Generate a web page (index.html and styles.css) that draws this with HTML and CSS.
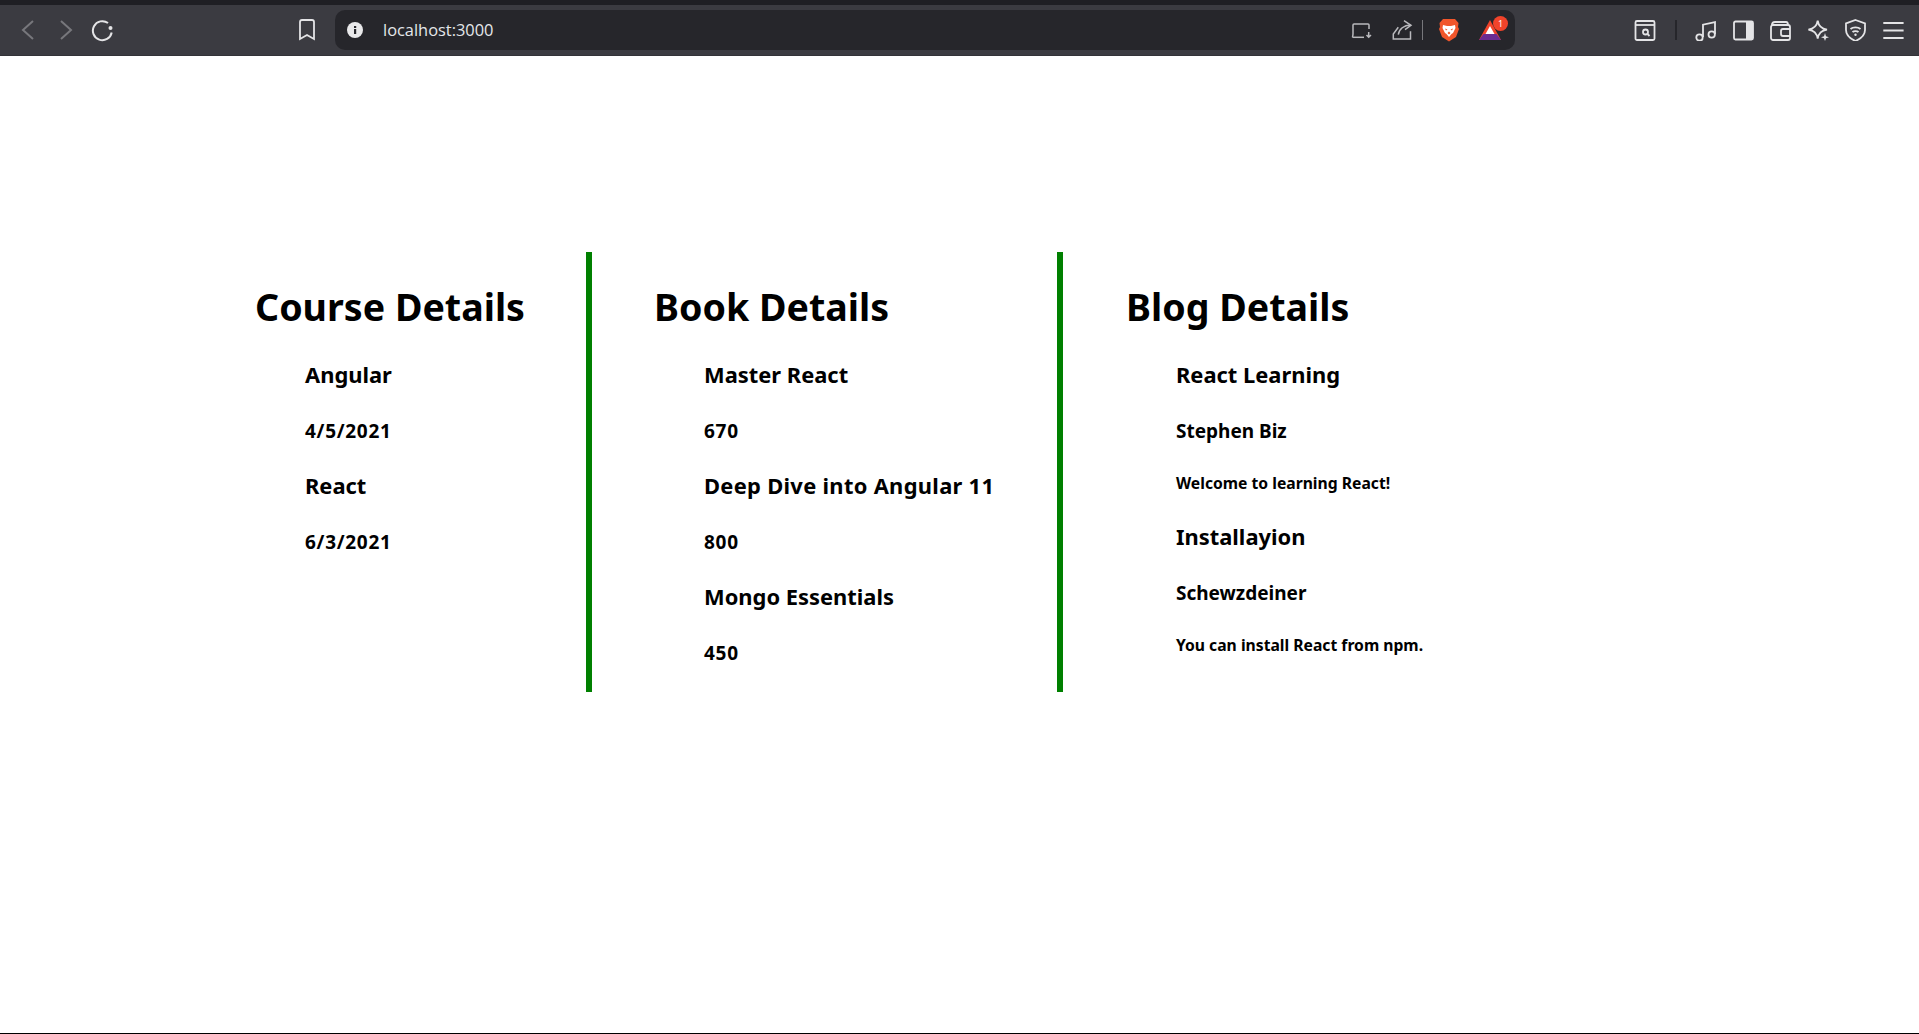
FILE: index.html
```html
<!DOCTYPE html>
<html lang="en">
<head>
  <meta charset="UTF-8">
  <title>localhost:3000</title>
  <link rel="stylesheet" href="styles.css">
</head>
<body>
  <header class="browser-bar">
    <div class="nav-icons">
      <svg class="icon dim" width="20" height="20" viewBox="0 0 20 20"><path d="M15 1 L5 10 L15 19"/></svg>
      <svg class="icon dim" width="20" height="20" viewBox="0 0 20 20"><path d="M5 1 L15 10 L5 19"/></svg>
      <svg class="icon" width="24" height="24" viewBox="0 0 24 24"><path d="M18 5 A9.5 9.5 0 1 0 21.7 14.5"/><circle class="fill" cx="20.5" cy="10" r="2"/></svg>
    </div>
    <svg class="icon bookmark small" width="20" height="24" viewBox="0 0 20 24"><path d="M3 4 Q3 2 5 2 H15 Q17 2 17 4 V21 L10 17 L3 21 Z"/></svg>
    <div class="url-box">
      <svg class="info" width="18" height="18" viewBox="0 0 18 18"><circle cx="9" cy="9" r="8" fill="#e8e8ea"/><rect x="8" y="8" width="2.2" height="5" fill="#26262b"/><rect x="8" y="5" width="2.2" height="2" fill="#26262b"/></svg>
      <span class="url-text">localhost:3000</span>
      <div class="url-actions">
        <svg class="icon thin" width="22" height="22" viewBox="0 0 22 22"><path d="M2 15 V6 Q2 5 3 5 H17 Q18 5 18 6 V10"/><path d="M1.5 18.3 H13"/><path d="M2 15 L1.5 18.3"/><path d="M17.7 13 V18 M15.5 16 L17.7 18.3 L20 16"/></svg>
        <svg class="icon thin share" width="22" height="22" viewBox="0 0 22 22"><path d="M7.3 8.3 L2.3 15 V20 H19.5 V12.3"/><path d="M7.3 15.7 C8 10 13 6 19.5 6"/><path d="M13 1.7 L20 6.3 L14 10.7"/></svg>
        <span class="url-sep"></span>
        <svg class="brave" width="22" height="24" viewBox="0 0 22 24"><path d="M5 1 H17 L20.5 5 L20 9 L21 11 L18 19 L11 23.5 L4 19 L1 11 L2 9 L1.5 5 Z" fill="#f1562b"/><path d="M5 7 L9 8 H13 L17 7 L17.5 10 L15 15 L13.5 16 L11 19 L8.5 16 L7 15 L4.5 10 Z" fill="#fff"/><path d="M7 10.5 L9.5 11.5 L8 12.5 Z M15 10.5 L12.5 11.5 L14 12.5 Z M9.5 15 L11 13.5 L12.5 15 L11 16.5 Z" fill="#f1562b"/></svg>
        <span class="rewards">
          <svg width="22" height="20" viewBox="0 0 22 20"><path d="M11 0 L22 20 H0 Z" fill="#f1432a"/><path d="M0 20 L4.5 14 H17.5 L22 20 Z" fill="#6b2c91"/><path d="M11 6 L15.5 14 H6.5 Z" fill="#fff"/></svg>
          <span class="badge">1</span>
        </span>
      </div>
    </div>
    <div class="tool-icons">
      <svg class="icon small" width="22" height="22" viewBox="0 0 22 22"><rect x="1.5" y="2" width="19" height="19" rx="1.5"/><path d="M1.5 6 H20.5"/><circle cx="11.5" cy="13" r="2.5"/><path d="M13.5 15 L15.5 17"/></svg>
      <span class="tool-sep"></span>
      <svg class="icon small" width="22" height="22" viewBox="0 0 22 22"><path d="M9 18 V5.7 L21 3 V15"/><circle cx="5.5" cy="18.5" r="3.2"/><circle cx="17.7" cy="15.5" r="3.2"/></svg>
      <svg class="icon small" width="22" height="22" viewBox="0 0 22 22"><rect x="2" y="2.5" width="19" height="18" rx="1.5"/><rect class="fill" x="14" y="2.5" width="7" height="18"/></svg>
      <svg class="icon small" width="22" height="22" viewBox="0 0 22 22"><path d="M3 6 Q3 3 6 3 H17 Q19 3 19 6"/><rect x="2" y="6" width="19" height="15" rx="2"/><path d="M21 10 H14 Q12 10 12 12 V15 Q12 17 14 17 H21"/></svg>
      <svg class="icon small" width="22" height="22" viewBox="0 0 22 22"><path d="M10.7 1.7 C11.5 7 14 9.8 20 10.7 C14 11.6 11.5 14.4 10.7 19.7 C9.9 14.4 7.4 11.6 1.4 10.7 C7.4 9.8 9.9 7 10.7 1.7 Z"/><path class="fill" d="M18 14 L19 17.3 L22 18.3 L19 19.3 L18 22 L17 19.3 L14 18.3 L17 17.3 Z"/></svg>
      <svg class="icon small" width="22" height="22" viewBox="0 0 22 22"><path d="M11.5 1 L21 4.5 V11 C21 16 16 20 11.5 22 C7 20 2 16 2 11 V4.5 Z"/><path d="M6.5 10 C9 7.8 14 7.8 16.5 10"/><path d="M8.5 13 C10 11.7 13 11.7 14.5 13"/><circle class="fill" cx="11.5" cy="15.8" r="1.2"/></svg>
      <svg class="icon small menu" width="22" height="22" viewBox="0 0 22 22"><path d="M1.3 4 H21.6 M1.3 11.4 H21.6 M1.3 19 H21.6"/></svg>
    </div>
  </header>

  <main class="details">
    <section class="panel">
      <h1>Course Details</h1>
      <div class="item">
        <h2>Angular</h2>
        <h3 class="num">4/5/2021</h3>
      </div>
      <div class="item">
        <h2>React</h2>
        <h3 class="num">6/3/2021</h3>
      </div>
    </section>
    <section class="panel book">
      <h1>Book Details</h1>
      <div class="item">
        <h2>Master React</h2>
        <h3 class="num">670</h3>
      </div>
      <div class="item">
        <h2 class="wide">Deep Dive into Angular 11</h2>
        <h3 class="num">800</h3>
      </div>
      <div class="item">
        <h2>Mongo Essentials</h2>
        <h3 class="num">450</h3>
      </div>
    </section>
    <section class="panel last">
      <h1>Blog Details</h1>
      <div class="item">
        <h2>React Learning</h2>
        <h3>Stephen Biz</h3>
        <h4>Welcome to learning React!</h4>
      </div>
      <div class="item">
        <h2>Installayion</h2>
        <h3>Schewzdeiner</h3>
        <h4>You can install React from npm.</h4>
      </div>
    </section>
  </main>
</body>
</html>
```

FILE: styles.css
```css
body {
  margin: 0;
  height: 1034px;
  box-sizing: border-box;
  border-bottom: 1px solid #000;
  overflow: hidden;
  background: #fff;
  color: #000;
  font-family: "Noto Sans", "Open Sans", sans-serif;
}

.browser-bar {
  height: 50px;
  border-top: 5px solid #1f1f24;
  border-bottom: 1px solid #333338;
  background: #3b3b41;
  display: flex;
  align-items: center;
}

.icon {
  fill: none;
  stroke: #e4e4e6;
  stroke-width: 2;
}

.icon .fill {
  fill: #e4e4e6;
  stroke: none;
}

.icon.dim {
  stroke: #77777c;
}

.icon.small {
  stroke-width: 1.8;
}

.icon.thin {
  stroke: #b9b9bd;
  stroke-width: 1.5;
}

.icon.menu {
  stroke-width: 2;
}

.nav-icons {
  display: flex;
  align-items: center;
  gap: 18px;
  margin-left: 18px;
}

.nav-icons .icon:last-child {
  margin-left: -4px;
}

.bookmark {
  margin-left: 183px;
}

.url-box {
  width: 1180px;
  height: 40px;
  margin-left: 18px;
  background: #26262b;
  border-radius: 10px;
  display: flex;
  align-items: center;
}

.info {
  margin-left: 11px;
}

.url-text {
  margin: 0 0 2px 19px;
  font-family: "Open Sans", sans-serif;
  font-size: 16.4px;
  color: #e4e6ea;
}

.url-actions {
  margin-left: auto;
  margin-right: 14px;
  display: flex;
  align-items: center;
}

.share {
  margin-left: 18px;
}

.url-sep {
  width: 1px;
  height: 20px;
  margin: 0 15px 0 9px;
  background: #77777c;
}

.rewards {
  position: relative;
  display: flex;
  margin-left: 19px;
}

.badge {
  position: absolute;
  top: -4px;
  right: -7px;
  width: 15px;
  height: 15px;
  border-radius: 50%;
  background: #f1432a;
  color: #fff;
  font-size: 9px;
  line-height: 15px;
  text-align: center;
}

.tool-icons {
  display: flex;
  align-items: center;
  gap: 15.5px;
  margin-left: 119px;
}

.tool-sep {
  width: 2px;
  height: 20px;
  margin: 0 2px 0 3px;
  background: #26262b;
}

.details {
  display: grid;
  grid-template-columns: 400px 471px 1fr;
  margin: 196px 0 0 192px;
}

.panel {
  height: 440px;
  padding-left: 63px;
  border-right: 6px solid green;
}

.panel.book {
  padding-left: 62px;
}

.panel.last {
  border-right: none;
}

h1 {
  margin: 30px 0 3px;
  font-size: 37.6px;
  line-height: 50px;
  font-weight: 700;
}

.item {
  margin-left: 50px;
}

h2 {
  margin: 0;
  padding-top: 24px;
  font-size: 21.9px;
  line-height: 32px;
}

h2.wide {
  letter-spacing: 0.3px;
}

h3 {
  margin: 0;
  padding-top: 25px;
  font-size: 19px;
  line-height: 30px;
}

h3.num {
  letter-spacing: 0.7px;
}

h4 {
  margin: 0;
  padding: 26px 0 3px;
  font-size: 15.7px;
  line-height: 22px;
}
```
